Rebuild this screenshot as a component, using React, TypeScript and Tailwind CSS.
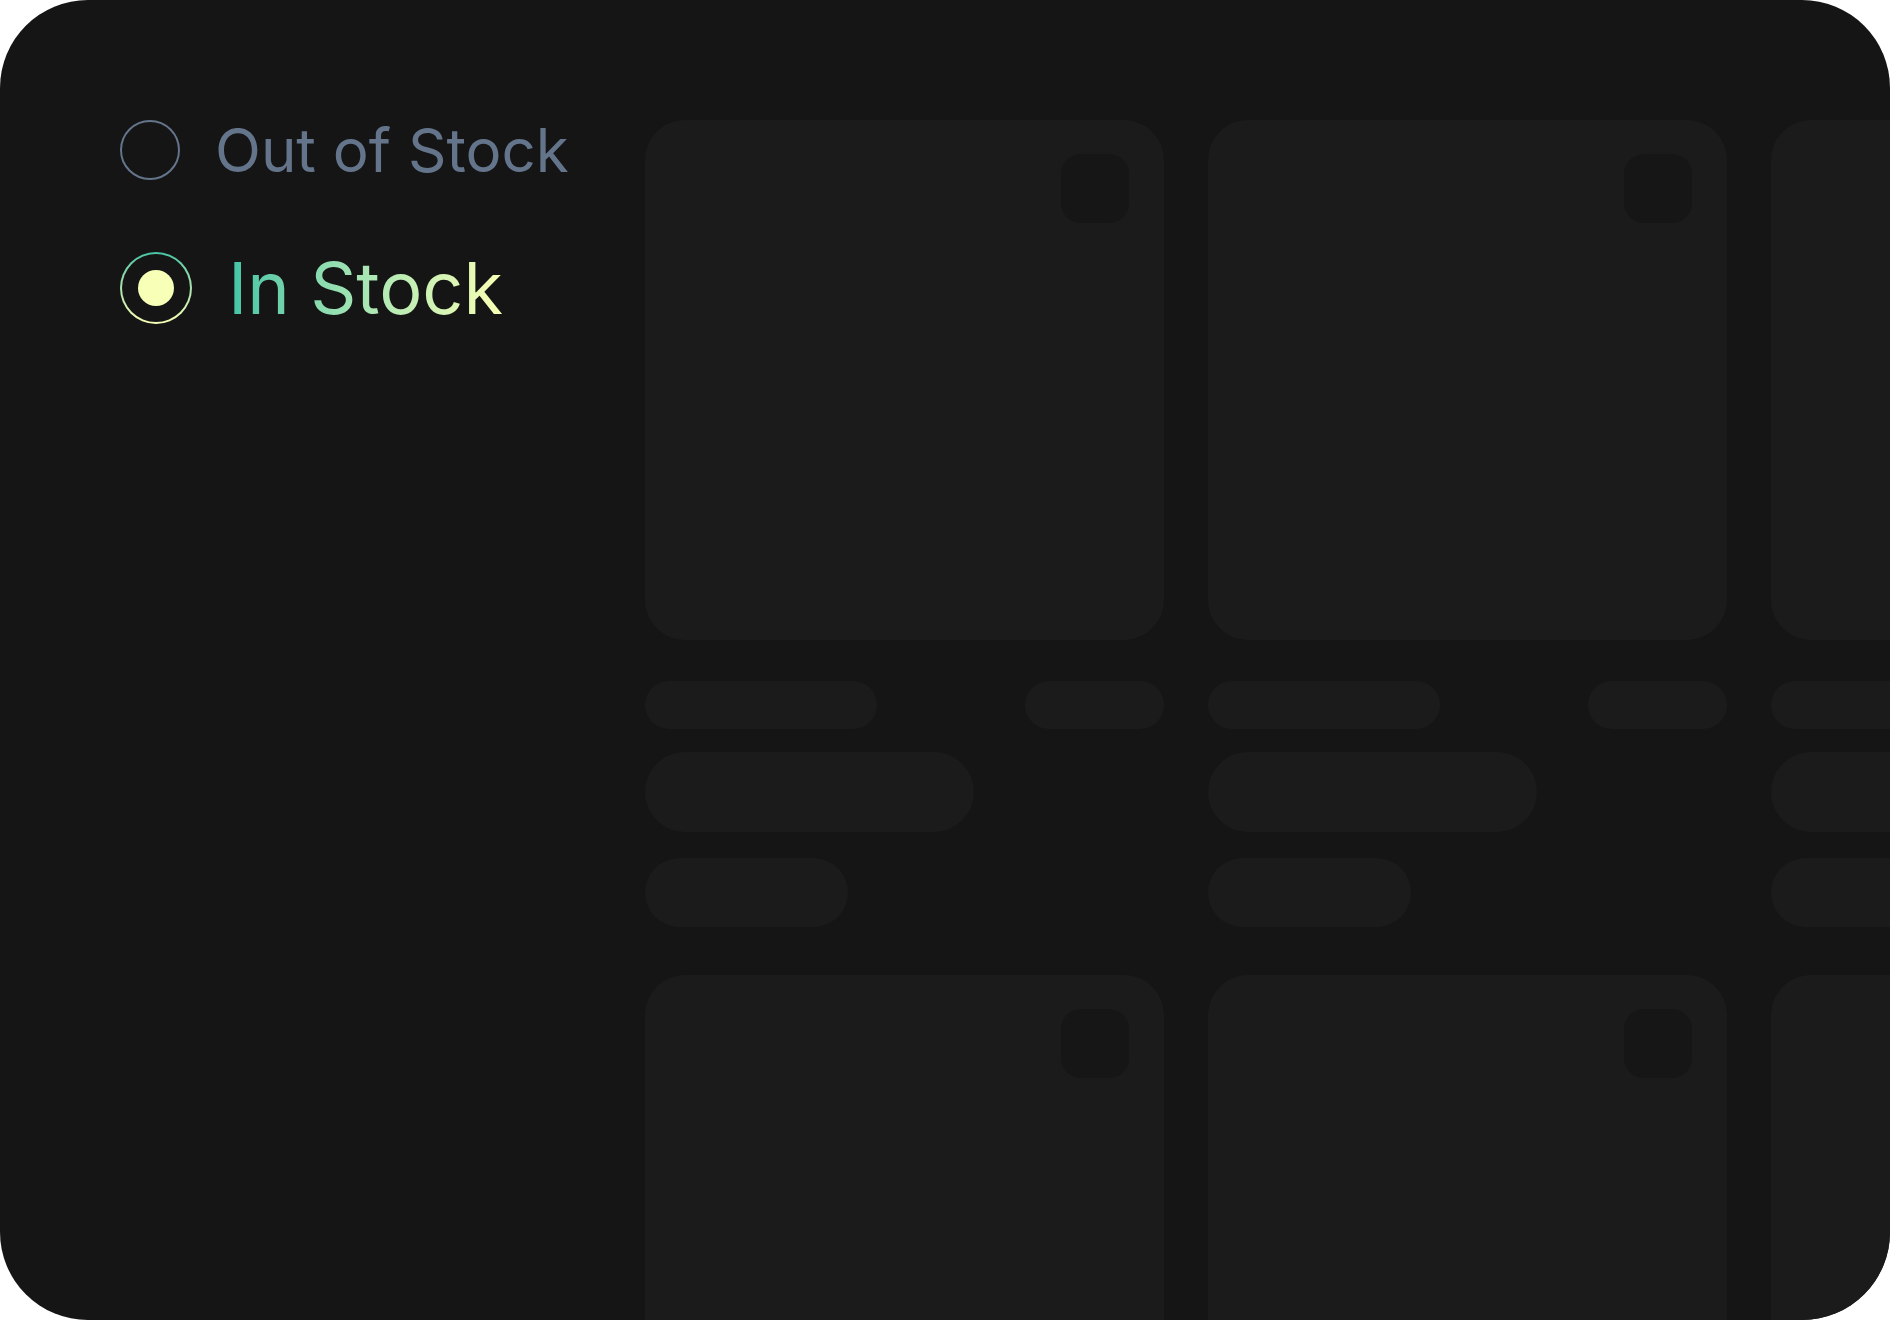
import React from "react";

function Skeleton() {
  return (
    <div className="flex w-[519px] shrink-0 flex-col">
      <div className="relative h-[520px] w-[519px] rounded-[40px] bg-[#1b1b1b]">
        <div className="absolute right-[35px] top-[34px] h-[69px] w-[68px] rounded-[20px] bg-[#161616]" />
      </div>
      <div className="mt-[41px] flex h-[48px] justify-between">
        <div className="h-[48px] w-[232px] rounded-full bg-[#1b1b1b]" />
        <div className="h-[48px] w-[139px] rounded-full bg-[#1b1b1b]" />
      </div>
      <div className="mt-[23px] h-[80px] w-[329px] rounded-full bg-[#1b1b1b]" />
      <div className="mt-[26px] h-[69px] w-[203px] rounded-full bg-[#1b1b1b]" />
    </div>
  );
}

export default function App() {
  return (
    <div className="h-[1320px] w-[1890px] bg-white">
      <div
        className="flex h-[1320px] w-[1890px] overflow-hidden rounded-[88px] bg-[#151515] pl-[120px] pt-[120px]"
        style={{ fontFamily: "Inter, 'Noto Sans', sans-serif" }}
      >
        <div className="flex w-[525px] shrink-0 flex-col">
          <div className="flex h-[60px] items-center">
            <div className="h-[60px] w-[60px] shrink-0 rounded-full border-2 border-[#64748b]" />
            <span className="ml-[35px] text-[60px] leading-none text-[#64748b]">Out of Stock</span>
          </div>
          <div className="mt-[72px] flex h-[72px] items-center">
            <div className="flex h-[72px] w-[72px] shrink-0 items-center justify-center rounded-full bg-gradient-to-b from-[#45c6a6] to-[#f8ffb6] p-[2.4px]">
              <div className="flex h-full w-full items-center justify-center rounded-full bg-[#151515]">
                <div className="h-[36px] w-[36px] rounded-full bg-[#f8ffb7]" />
              </div>
            </div>
            <span className="ml-[36px] bg-gradient-to-r from-[#3fc4a6] via-[#a8e6b4] to-[#f8ffb4] bg-clip-text text-[72px] leading-none text-transparent">
              In Stock
            </span>
          </div>
        </div>
        <div className="flex flex-col gap-[48px]">
          <div className="flex gap-[44px]">
            <Skeleton />
            <Skeleton />
            <Skeleton />
          </div>
          <div className="flex gap-[44px]">
            <Skeleton />
            <Skeleton />
            <Skeleton />
          </div>
        </div>
      </div>
    </div>
  );
}
